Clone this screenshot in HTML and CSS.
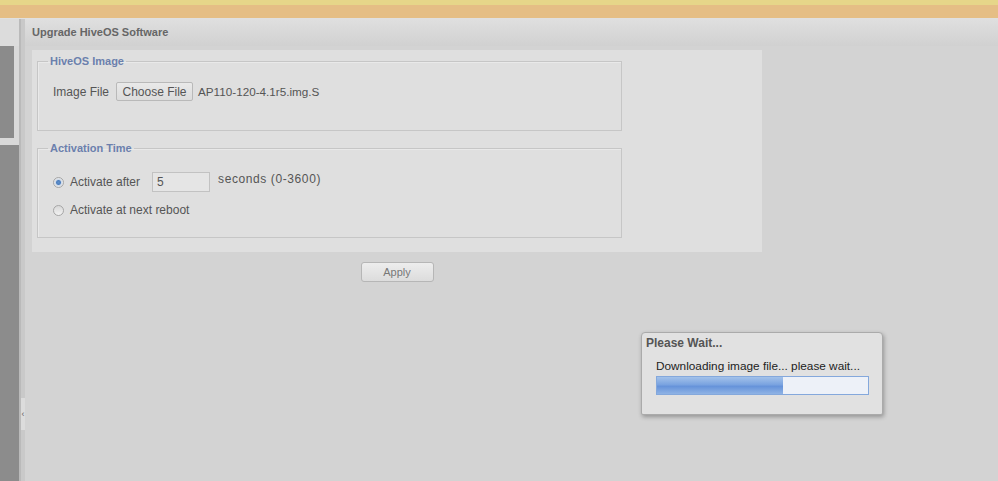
FILE: index.html
```html
<!DOCTYPE html>
<html lang="en">
<head>
  <meta charset="UTF-8">
  <meta name="viewport" content="width=device-width, initial-scale=1.0">
  <title>Upgrade HiveOS Software</title>
  <link rel="stylesheet" href="styles.css">
</head>
<body>
  <div class="topbar"></div>

  <div class="layout">
    <!-- Navigation tree (collapsed) -->
    <div class="sidebar">
      <div class="sidebar-head"></div>
      <div class="nav-box"><div class="nav-inner"></div></div>
      <div class="nav-rest"></div>
    </div>

    <div class="splitter">
      <span class="splitter-handle">&#8249;</span>
    </div>

    <div class="main">
      <div class="main-header">Upgrade HiveOS Software</div>

      <div class="main-body">
        <form class="panel">
          <fieldset>
            <legend>HiveOS Image</legend>
            <div class="form-row">
              <span class="label">Image File</span>
              <button type="button" class="file-button">Choose File</button>
              <span class="file-name">AP110-120-4.1r5.img.S</span>
            </div>
          </fieldset>

          <fieldset class="activation">
            <legend>Activation Time</legend>
            <div class="form-row first">
              <input type="radio" name="activate" checked>
              <span class="label">Activate after</span>
              <input type="text" class="seconds" value="5">
              <span class="hint">seconds (0-3600)</span>
            </div>
            <div class="form-row second">
              <input type="radio" name="activate">
              <span class="label">Activate at next reboot</span>
            </div>
          </fieldset>
        </form>

        <div class="actions">
          <button type="button" class="apply">Apply</button>
        </div>
      </div>

      <!-- Modal progress dialog -->
      <div class="wait-dialog">
        <div class="wait-title">Please Wait...</div>
        <div class="wait-body">
          <div class="wait-text">Downloading image file... please wait...</div>
          <div class="progress"><div class="progress-fill" style="width: 126px"></div></div>
        </div>
      </div>
    </div>
  </div>
</body>
</html>
```

FILE: styles.css
```css
body {
  margin: 0;
  height: 100vh;
  font-family: "Liberation Sans", Arial, sans-serif;
  font-size: 12px;
  color: #555;
  background-color: #d3d3d3;
  overflow: hidden;
}

/* Top banner */
.topbar {
  height: 13px;
  border-top: 5px solid #e6d689;
  border-bottom: 1px solid #e0e0e0;
  background-color: #e5be85;
}

.layout {
  display: flex;
  height: calc(100vh - 19px);
}

/* Left navigation */
.sidebar {
  width: 19px;
  border-right: 2px solid #bababa;
  display: flex;
  flex-direction: column;
}

.sidebar-head {
  height: 27px;
  background-color: #dcdcdc;
}

.nav-box {
  height: 99px;
  background-color: #d9d9d9;
}

.nav-inner {
  width: 14px;
  height: 92px;
  background-color: #8b8b8b;
}

.nav-rest {
  flex-grow: 1;
  background-color: #8c8c8c;
}

.splitter {
  width: 4px;
  background-color: #c9c9c9;
}

.splitter-handle {
  display: block;
  margin-top: 379px;
  height: 32px;
  background-color: #dcdcdc;
  font-size: 9px;
  line-height: 32px;
  color: #666;
  text-align: center;
  overflow: hidden;
}

/* Main area */
.main {
  flex-grow: 1;
  position: relative;
  background-color: #d3d3d3;
}

.main-header {
  height: 27px;
  line-height: 27px;
  padding-left: 7px;
  font-size: 11px;
  font-weight: bold;
  color: #666;
  background: linear-gradient(#dfdfdf, #d1d1d1);
}

.main-body {
  padding: 4px 0 0 7px;
}

.panel {
  width: 730px;
  height: 202px;
  box-sizing: border-box;
  padding: 5px;
  background-color: #dfdfdf;
}

fieldset {
  width: 585px;
  box-sizing: border-box;
  margin: 0;
  padding: 0 15px 29px;
  border: 1px solid #c6c6c6;
  box-shadow: inset 1px 1px 0 #e9e9e9;
}

fieldset.activation {
  margin-top: 11px;
  padding-bottom: 20px;
}

legend {
  margin-left: -5px;
  padding: 0 2px;
  font-size: 11px;
  font-weight: bold;
  line-height: 13px;
  color: #6b80ad;
}

.form-row {
  display: flex;
  align-items: center;
  margin-top: 14px;
}

.form-row.first {
  margin-top: 17px;
}

.form-row.second {
  margin-top: 11px;
}

.file-button {
  margin-left: 7px;
  width: 77px;
  height: 19px;
  padding: 0;
  font-family: inherit;
  font-size: 12px;
  color: #555;
  border: 1px solid #b9b9b9;
  border-radius: 2px;
  background: linear-gradient(#e9e9e9, #dcdcdc);
}

.file-name {
  margin-left: 5px;
  font-size: 11.7px;
}

input[type="radio"] {
  appearance: none;
  margin: 0 6px 0 0;
  width: 11px;
  height: 11px;
  border: 1px solid #a6a6a6;
  border-radius: 50%;
  background: linear-gradient(#d8d8d8, #f2f2f2);
}

input[type="radio"]:checked {
  background: radial-gradient(circle, #5e8fc9 0, #4d7fbf 2px, #cfd9e6 3px, #eeeeee 5px);
}

.seconds {
  margin-left: 12px;
  width: 58px;
  height: 20px;
  box-sizing: border-box;
  padding: 0 4px;
  font-family: inherit;
  font-size: 12px;
  color: #555;
  border: 1px solid #c2c2c2;
  background-color: #e5e5e5;
}

.hint {
  align-self: flex-start;
  margin-left: 8px;
  line-height: 14px;
  letter-spacing: 0.6px;
}

.actions {
  width: 730px;
  margin-top: 10px;
  text-align: center;
}

.apply {
  width: 73px;
  height: 20px;
  padding: 0;
  font-family: inherit;
  font-size: 11px;
  color: #777;
  border: 1px solid #b6b6b6;
  border-radius: 3px;
  background: linear-gradient(#ededed, #dcdcdc);
}

/* Please wait dialog */
.wait-dialog {
  position: absolute;
  left: 616px;
  top: 313px;
  width: 242px;
  height: 83px;
  box-sizing: border-box;
  border: 1px solid #aaaaaa;
  border-radius: 4px 4px 2px 2px;
  background-color: #e1e1e1;
  box-shadow: 1px 2px 4px rgba(0, 0, 0, 0.3);
}

.wait-title {
  padding: 3px 4px 0;
  font-weight: bold;
  line-height: 14px;
  color: #555;
}

.wait-body {
  padding: 9px 0 0 14px;
}

.wait-text {
  line-height: 14px;
  font-size: 11.8px;
  color: #222;
}

.progress {
  margin-top: 3px;
  width: 213px;
  height: 19px;
  box-sizing: border-box;
  border: 1px solid #84a8dc;
  background-color: #edf1f8;
}

.progress-fill {
  height: 100%;
  background: linear-gradient(#a3c2ea, #7aa3e0 45%, #6693da 55%, #8fb3e5);
}
```
